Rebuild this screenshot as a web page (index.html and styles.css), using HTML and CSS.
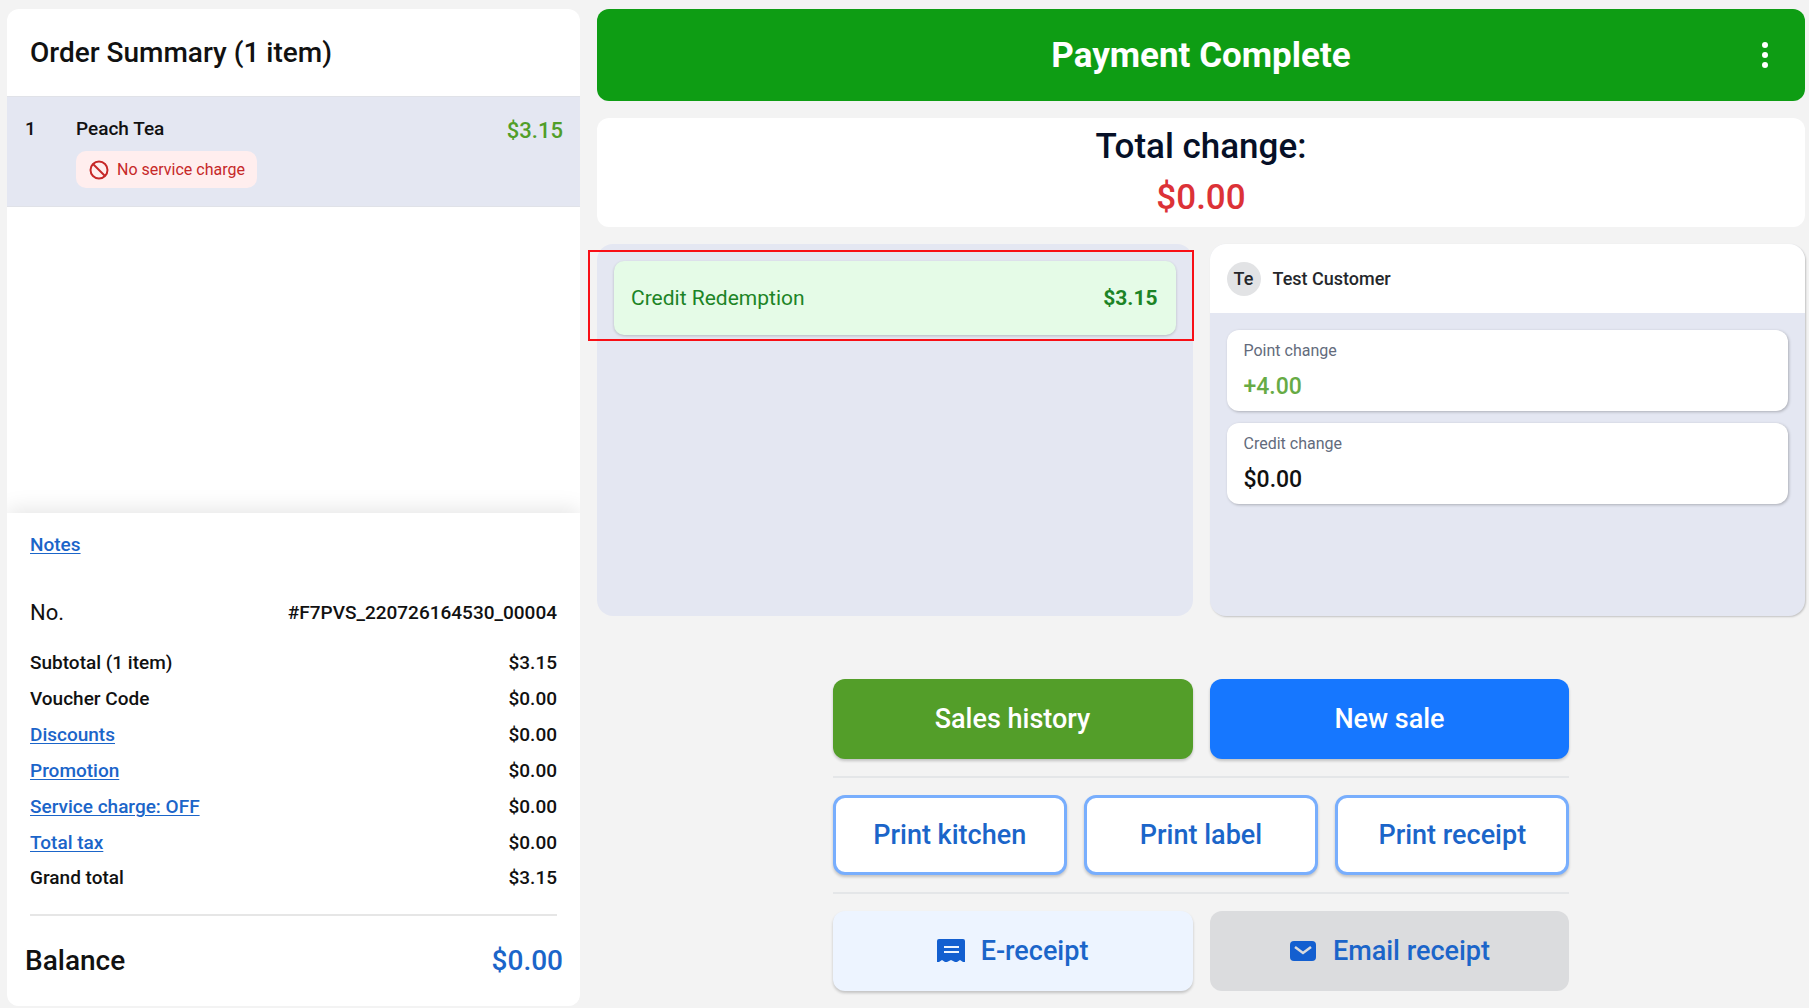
FILE: index.html
```html
<!DOCTYPE html>
<html lang="en">
<head>
  <meta charset="UTF-8" />
  <title>Payment Complete</title>
  <meta name="viewport" content="width=device-width, initial-scale=1.0" />
  <link rel="stylesheet" href="styles.css">
</head>
<body>

  <div class="page">

    <!-- Order summary -->
    <aside class="order">
      <h2 class="order-title">Order Summary (1 item)</h2>

      <div class="order-list">
        <div class="order-item">
          <span class="qty">1</span>
          <div class="item-info">
            <span class="item-name">Peach Tea</span>
            <span class="tag">
              <svg width="20" height="20" viewBox="0 0 20 20" fill="none" stroke="#c62828" stroke-width="2">
                <circle cx="10" cy="10" r="8.5" />
                <path d="M4 4l12 12" />
              </svg>
              No service charge
            </span>
          </div>
          <span class="item-price">$3.15</span>
        </div>
      </div>

      <div class="order-footer">
        <a class="notes" href="#notes">Notes</a>
        <table class="totals">
          <tr class="order-no"><th scope="row">No.</th><td>#F7PVS_220726164530_00004</td></tr>
          <tr><th scope="row">Subtotal (1 item)</th><td>$3.15</td></tr>
          <tr><th scope="row">Voucher Code</th><td>$0.00</td></tr>
          <tr><th scope="row"><a href="#discounts">Discounts</a></th><td>$0.00</td></tr>
          <tr><th scope="row"><a href="#promotion">Promotion</a></th><td>$0.00</td></tr>
          <tr><th scope="row"><a href="#service">Service charge: OFF</a></th><td>$0.00</td></tr>
          <tr><th scope="row"><a href="#tax">Total tax</a></th><td>$0.00</td></tr>
          <tr><th scope="row">Grand total</th><td>$3.15</td></tr>
        </table>
        <div class="balance">
          <span>Balance</span>
          <span class="balance-value">$0.00</span>
        </div>
      </div>
    </aside>

    <!-- Payment result -->
    <main class="payment">
      <header class="banner">
        <h1>Payment Complete</h1>
        <button class="menu-btn" type="button" aria-label="More options">
          <svg width="8" height="28" viewBox="0 0 8 28" fill="#fff">
            <circle cx="4" cy="4" r="3" />
            <circle cx="4" cy="14" r="3" />
            <circle cx="4" cy="24" r="3" />
          </svg>
        </button>
      </header>

      <section class="change">
        <div>Total change:</div>
        <div class="change-value">$0.00</div>
      </section>

      <div class="panels">
        <section class="panel tenders">
          <div class="tender">
            <span>Credit Redemption</span>
            <strong>$3.15</strong>
          </div>
          <div class="highlight"></div>
        </section>

        <section class="panel customer">
          <div class="customer-head">
            <span class="avatar">Te</span>
            <span>Test Customer</span>
          </div>
          <div class="customer-body">
            <div class="stat">
              <span class="stat-label">Point change</span>
              <span class="stat-value plus">+4.00</span>
            </div>
            <div class="stat">
              <span class="stat-label">Credit change</span>
              <span class="stat-value">$0.00</span>
            </div>
          </div>
        </section>
      </div>

      <div class="actions">
        <div class="action-row">
          <button class="btn btn-green" type="button">Sales history</button>
          <button class="btn btn-blue" type="button">New sale</button>
        </div>
        <hr>
        <div class="action-row">
          <button class="btn btn-outline" type="button">Print kitchen</button>
          <button class="btn btn-outline" type="button">Print label</button>
          <button class="btn btn-outline" type="button">Print receipt</button>
        </div>
        <hr>
        <div class="action-row">
          <button class="btn btn-light" type="button">
            <svg width="28" height="24" viewBox="0 0 28 24">
              <path fill="#135fd0" d="M2 0h24q2 0 2 2v21h-2l-3-2-3 2h-2l-4-2-4 2H8l-3-2-3 2H0V2q0-2 2-2z" />
              <path stroke="#edf4ff" stroke-width="2" d="M7 8h15M7 13h15" />
            </svg>
            E-receipt
          </button>
          <button class="btn btn-grey" type="button">
            <svg width="28" height="24" viewBox="0 0 28 24">
              <rect x="1" y="2" width="26" height="20" rx="4" fill="#135fd0" />
              <path fill="none" stroke="#dbdcde" stroke-width="2.500" d="M6 8l8 6 8-6" />
            </svg>
            Email receipt
          </button>
        </div>
      </div>
    </main>

  </div>

</body>
</html>
```
FILE: styles.css
```css
* {
  box-sizing: border-box;
}
body {
  margin: 0;
  background: #f3f3f3;
  color: #111;
  font-family: Roboto, "Liberation Sans", sans-serif;
  font-size: 19px;
  font-weight: 500;
}
.page {
  display: grid;
  grid-template-columns: 573fr 1208fr;
  gap: 17px;
  min-height: 100vh;
  padding: 9px 4px 2px 7px;
}
a {
  color: #1b65c9;
  text-underline-offset: 2px;
  text-decoration-thickness: 1px;
}

/* order summary */
.order {
  display: flex;
  flex-direction: column;
  background: #fff;
  border-radius: 12px;
  overflow: hidden;
}
.order-title {
  margin: 0;
  padding: 0 23px;
  font-size: 28px;
  font-weight: 500;
  line-height: 87px;
}
.order-list {
  flex: 1;
}
.order-item {
  display: flex;
  height: 111px;
  padding: 19px 17px 0 18px;
  background: #e4e7f2;
  border-top: 1px solid #e0e2e8;
  border-bottom: 1px solid #e0e2e8;
  line-height: 26px;
}
.qty {
  width: 51px;
}
.item-info {
  display: flex;
  flex: 1;
  flex-direction: column;
  align-items: flex-start;
  gap: 9px;
}
.tag {
  display: flex;
  align-items: center;
  gap: 8px;
  height: 37px;
  padding: 0 12px 0 13px;
  border-radius: 10px;
  background: #ffeeee;
  color: #c62828;
  font-size: 16px;
  font-weight: 400;
}
.item-price {
  color: #519e29;
  font-size: 22px;
  line-height: 30px;
}
.order-footer {
  padding: 14px 17px 0 18px;
  background: #fff;
  box-shadow: 0 -4px 20px rgba(0, 0, 0, 0.1);
}
.notes {
  display: inline-block;
  margin: 0 5px 25px;
  line-height: 36px;
}
.totals {
  width: calc(100% - 11px);
  margin: 0 6px 0 5px;
  border-collapse: collapse;
  border-bottom: 2px solid #e6e6e6;
}
.totals th,
.totals td {
  height: 36px;
  padding: 0;
  font-weight: 500;
  text-align: left;
}
.totals td {
  text-align: right;
}
.totals .order-no > * {
  height: 56px;
  padding-bottom: 8px;
}
.totals .order-no th {
  font-size: 22px;
  font-weight: 400;
}
.totals tr:last-child > * {
  height: 55px;
  padding-bottom: 19px;
}
.balance {
  display: flex;
  justify-content: space-between;
  font-size: 28px;
  line-height: 90px;
}
.balance-value {
  color: #1b65c9;
}

/* payment side */
.payment {
  display: flex;
  flex-direction: column;
  gap: 17px;
}
.banner {
  display: flex;
  position: relative;
  align-items: center;
  justify-content: center;
  height: 92px;
  border-radius: 12px;
  background: #0e9d14;
  color: #fff;
}
.banner h1 {
  margin: 0;
  font-size: 35px;
  font-weight: 700;
}
.menu-btn {
  position: absolute;
  right: 28px;
  padding: 8px;
  border: none;
  background: none;
  line-height: 0;
  cursor: pointer;
}
.change {
  height: 109px;
  padding-top: 3px;
  border-radius: 12px;
  background: #fff;
  color: #061027;
  font-size: 35px;
  line-height: 51px;
  text-align: center;
}
.change-value {
  color: #dc3237;
}
.panels {
  display: grid;
  grid-template-columns: 1fr 1fr;
  gap: 17px;
  min-height: 372px;
}
.panel {
  position: relative;
  border-radius: 16px;
  background: #e4e7f2;
}
.tenders {
  padding: 17px;
}
.tender {
  display: flex;
  align-items: center;
  justify-content: space-between;
  height: 74px;
  padding: 0 18px 0 17px;
  border-radius: 10px;
  background: #e5fbe7;
  box-shadow: 0 1px 3px rgba(0, 0, 0, 0.2);
  color: #1c8426;
  font-size: 21px;
  font-weight: 400;
}
.tender strong {
  font-weight: 700;
}
.highlight {
  position: absolute;
  top: 6px;
  right: -1px;
  left: -9px;
  height: 91px;
  border: 2px solid #f80f16;
}
.customer {
  overflow: hidden;
  box-shadow: 1px 1px 2px rgba(0, 0, 0, 0.2);
}
.customer-head {
  display: flex;
  align-items: center;
  gap: 12px;
  height: 69px;
  padding: 0 17px;
  background: #fff;
  color: #25272b;
  font-size: 18px;
}
.avatar {
  width: 34px;
  border-radius: 50%;
  background: #e2e3e5;
  line-height: 34px;
  text-align: center;
}
.customer-body {
  display: flex;
  flex-direction: column;
  gap: 12px;
  padding: 17px;
}
.stat {
  display: flex;
  flex-direction: column;
  height: 81px;
  padding: 4px 17px;
  border-radius: 12px;
  background: #fff;
  box-shadow: 1px 1px 3px rgba(0, 0, 0, 0.25);
}
.stat-label {
  color: #636b7c;
  font-size: 16px;
  font-weight: 400;
  line-height: 34px;
}
.stat-value {
  font-size: 23px;
  line-height: 38px;
}
.plus {
  color: #67ab45;
}

/* action buttons */
.actions {
  display: flex;
  flex-direction: column;
  gap: 17px;
  width: 61%;
  min-width: 640px;
  margin: 46px auto 0;
}
.actions hr {
  width: 100%;
  margin: 0;
  border: none;
  border-top: 2px solid #e4e6e8;
}
.action-row {
  display: flex;
  gap: 17px;
}
.btn {
  display: flex;
  flex: 1;
  align-items: center;
  justify-content: center;
  gap: 16px;
  height: 80px;
  border: none;
  border-radius: 12px;
  box-shadow: 0 2px 3px rgba(0, 0, 0, 0.2);
  color: #1b65c9;
  font-family: inherit;
  font-size: 27px;
  font-weight: 500;
  cursor: pointer;
}
.btn-green {
  background: #539e29;
  color: #fff;
}
.btn-blue {
  background: #1677ff;
  color: #fff;
}
.btn-outline {
  border: 3px solid #78aefd;
  background: #fff;
}
.btn-light {
  background: #edf4ff;
}
.btn-grey {
  background: #dbdcde;
  box-shadow: none;
}
```
